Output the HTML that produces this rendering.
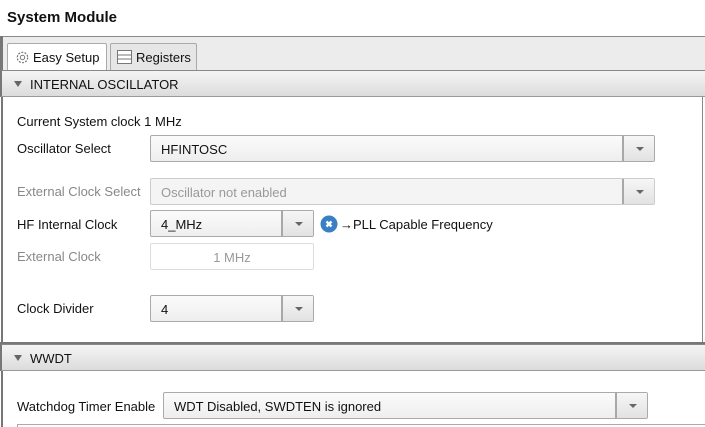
<!DOCTYPE html>
<html><head><meta charset="utf-8"><style>
*{box-sizing:border-box;margin:0;padding:0}
body{width:705px;height:427px;overflow:hidden;background:#fff;font-family:"Liberation Sans",Arial,sans-serif;font-size:13px;color:#111;position:relative}
.a{position:absolute}
.title{left:7px;top:9px;font-size:15px;font-weight:bold}
.tabbar{left:0;top:36px;width:705px;height:35px;background:#ececec;border-top:1px solid #8a8a8a;border-left:2px solid #777}
.tab{top:43px;height:28px;border:1px solid #aaa;border-bottom:none;background:#e6e6e6;border-radius:2px 2px 0 0;padding:6px 0 0 25px;font-size:13px}
.tab.sel{background:#fff}
.hdr{left:0;width:705px;height:27px;background:linear-gradient(#f4f4f4,#dcdcdc);border-top:1px solid #888;border-bottom:1px solid #999;border-left:2px solid #777;padding:6px 0 0 28px;font-size:13px}
.hdr:before{content:"";position:absolute;left:12px;top:10px;border-left:4px solid transparent;border-right:4px solid transparent;border-top:6px solid #666}
.lbl{left:17px}
.combo{height:27px;border:1px solid #aaa;background:linear-gradient(#fbfbfb,#eee);border-radius:2px;padding:6px 0 0 10px}
.combo .b{position:absolute;right:0;top:0;width:32px;height:25px;border-left:2px solid #a8a8a8;background:linear-gradient(#f6f6f6,#e2e2e2)}
.combo .b:after{content:"";position:absolute;left:12px;top:11px;border-left:4px solid transparent;border-right:4px solid transparent;border-top:4px solid #666}
.dis{color:#999;background:#f4f4f4;border-color:#ccc}
</style></head><body>
<div class="a title">System Module</div>
<div class="a tabbar"></div>
<div class="a" style="left:1px;top:36px;width:2px;height:391px;background:#777"></div>
<div class="a" style="left:702px;top:71px;width:1px;height:273px;background:#888"></div>
<div class="a tab sel" style="left:7px;width:100px">
<svg class="a" style="left:7px;top:6px" width="15" height="15" viewBox="0 0 15 15"><circle cx="7.5" cy="7.5" r="5.2" fill="none" stroke="#777" stroke-width="1.2" stroke-dasharray="2 1.3"/><circle cx="7.5" cy="7.5" r="2.2" fill="none" stroke="#777"/></svg>Easy Setup</div>
<div class="a tab" style="left:110px;width:87px">
<svg class="a" style="left:6px;top:6px" width="15" height="14" viewBox="0 0 15 14"><rect x="0.5" y="0.5" width="14" height="13" fill="#fff" stroke="#777"/><path d="M1 5H14M1 9H14" stroke="#777"/></svg>Registers</div>
<div class="a hdr" style="top:70px">INTERNAL OSCILLATOR</div>
<div class="a lbl" style="top:114px">Current System clock 1 MHz</div>
<div class="a lbl" style="top:141px">Oscillator Select</div>
<div class="a combo" style="left:150px;top:135px;width:505px">HFINTOSC<div class="b"></div></div>
<div class="a lbl" style="top:184px;color:#888">External Clock Select</div>
<div class="a combo dis" style="left:150px;top:178px;width:505px">Oscillator not enabled<div class="b"></div></div>
<div class="a lbl" style="top:217px">HF Internal Clock</div>
<div class="a combo" style="left:150px;top:210px;width:164px">4_MHz<div class="b"></div></div>
<svg class="a" style="left:320px;top:215px" width="18" height="18" viewBox="0 0 18 18"><circle cx="9" cy="9" r="8.5" fill="#3a7fc4"/><path d="M6.5 6.5L11.5 11.5M11.5 6.5L6.5 11.5" stroke="#fff" stroke-width="2.4"/></svg>
<div class="a" style="left:340px;top:217px">→PLL Capable Frequency</div>
<div class="a lbl" style="top:249px;color:#888">External Clock</div>
<div class="a" style="left:150px;top:243px;width:164px;height:27px;border:1px solid #ddd;border-radius:2px;text-align:center;padding-top:6px;color:#999">1 MHz</div>
<div class="a lbl" style="top:301px">Clock Divider</div>
<div class="a combo" style="left:150px;top:295px;width:164px">4<div class="b"></div></div>
<div class="a" style="left:0;top:342px;width:705px;height:2px;background:#777"></div>
<div class="a hdr" style="top:344px">WWDT</div>
<div class="a lbl" style="top:399px">Watchdog Timer Enable</div>
<div class="a combo" style="left:163px;top:392px;width:485px">WDT Disabled, SWDTEN is ignored<div class="b"></div></div>
<div class="a" style="left:17px;top:424px;width:690px;height:3px;border-top:1px solid #aaa;border-left:1px solid #aaa"></div>
</body></html>
